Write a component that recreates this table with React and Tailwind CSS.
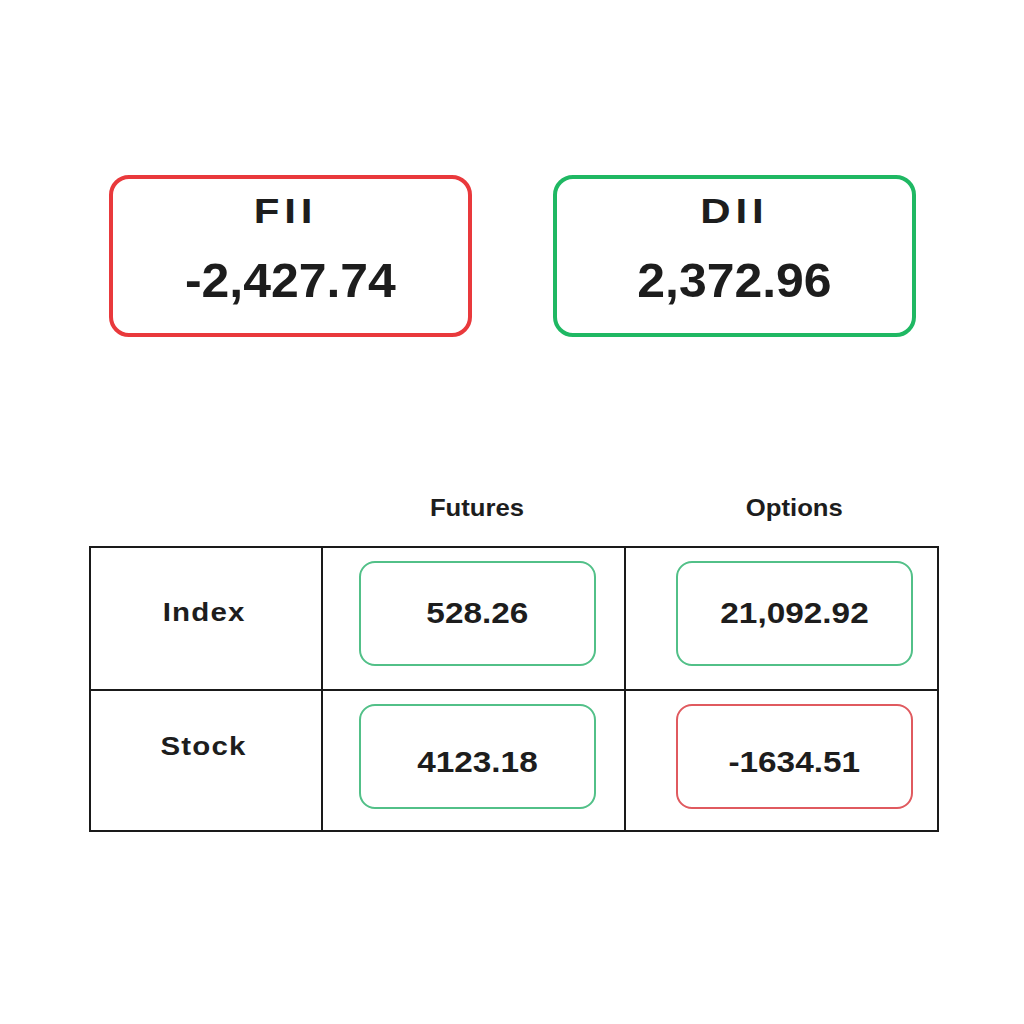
import React from 'react';

const font = { fontFamily: '"Liberation Sans", Arial, sans-serif' };

const BigCard = ({ title, value, border, titleShift }) => (
  <div className={`w-[363px] h-[162px] border-4 ${border} rounded-[20px] flex flex-col items-center pt-[14px]`}>
    <div className={`text-[35px] leading-none font-bold tracking-[4px] h-[35px] scale-x-[1.2] ${titleShift}`}>{title}</div>
    <div className="text-[48px] leading-none font-bold mt-[29px] scale-x-[1.04]">{value}</div>
  </div>
);

const ValueBox = ({ value, red, offset, valPt }) => (
  <div
    className={`${offset} w-[237px] h-[105px] rounded-[16px] border-2 flex items-center justify-center ${valPt} ${
      red ? 'border-[#e05a5f]' : 'border-[#52c088]'
    }`}
  >
    <span className="inline-block text-[29px] leading-none font-bold scale-x-[1.15]">{value}</span>
  </div>
);

export default function App() {
  const rows = [
    { label: 'Index', pt: 'pt-[52px]', fut: '528.26', opt: '21,092.92', cell: 'h-[143px] border-b-2', valPt: '' },
    { label: 'Stock', pt: 'pt-[43px]', fut: '4123.18', opt: '-1634.51', optRed: true, cell: 'h-[139px]', valPt: 'pt-[12px]' },
  ];

  return (
    <div className="w-[1024px] h-[1024px] bg-white text-[#1d1d1d]" style={font}>
      <div className="flex justify-center gap-[81px] pt-[175px]">
        <BigCard title="FII" value="-2,427.74" border="border-[#e9393c]" titleShift="mr-[10px]" />
        <BigCard title="DII" value="2,372.96" border="border-[#1fb863]" titleShift="" />
      </div>

      <div className="ml-[89px] w-[850px] mt-[159px]">
        {/* column headers */}
        <div className="grid grid-cols-[234px_303px_313px] h-[50px]">
          <div />
          <div className="ml-[36px] w-[237px] text-center">
            <span className="inline-block text-[24px] leading-none font-bold scale-x-[1.07]">Futures</span>
          </div>
          <div className="ml-[50px] w-[237px] text-center">
            <span className="inline-block text-[24px] leading-none font-bold scale-x-[1.07]">Options</span>
          </div>
        </div>

        <div className="border-2 border-[#1a1a1a]">
          {rows.map((r) => (
            <div key={r.label} className={`grid grid-cols-[232px_303px_311px] border-[#1a1a1a] ${r.cell}`}>
              <div className={`border-r-2 border-[#1a1a1a] text-center pr-[4px] ${r.pt}`}>
                <span className="inline-block text-[25px] leading-none font-bold tracking-[1px] scale-x-[1.18]">{r.label}</span>
              </div>
              <div className="border-r-2 border-[#1a1a1a] pt-[13px]">
                <ValueBox value={r.fut} offset="ml-[36px]" valPt={r.valPt} />
              </div>
              <div className="pt-[13px]">
                <ValueBox value={r.opt} red={r.optRed} offset="ml-[50px]" valPt={r.valPt} />
              </div>
            </div>
          ))}
        </div>
      </div>
    </div>
  );
}
